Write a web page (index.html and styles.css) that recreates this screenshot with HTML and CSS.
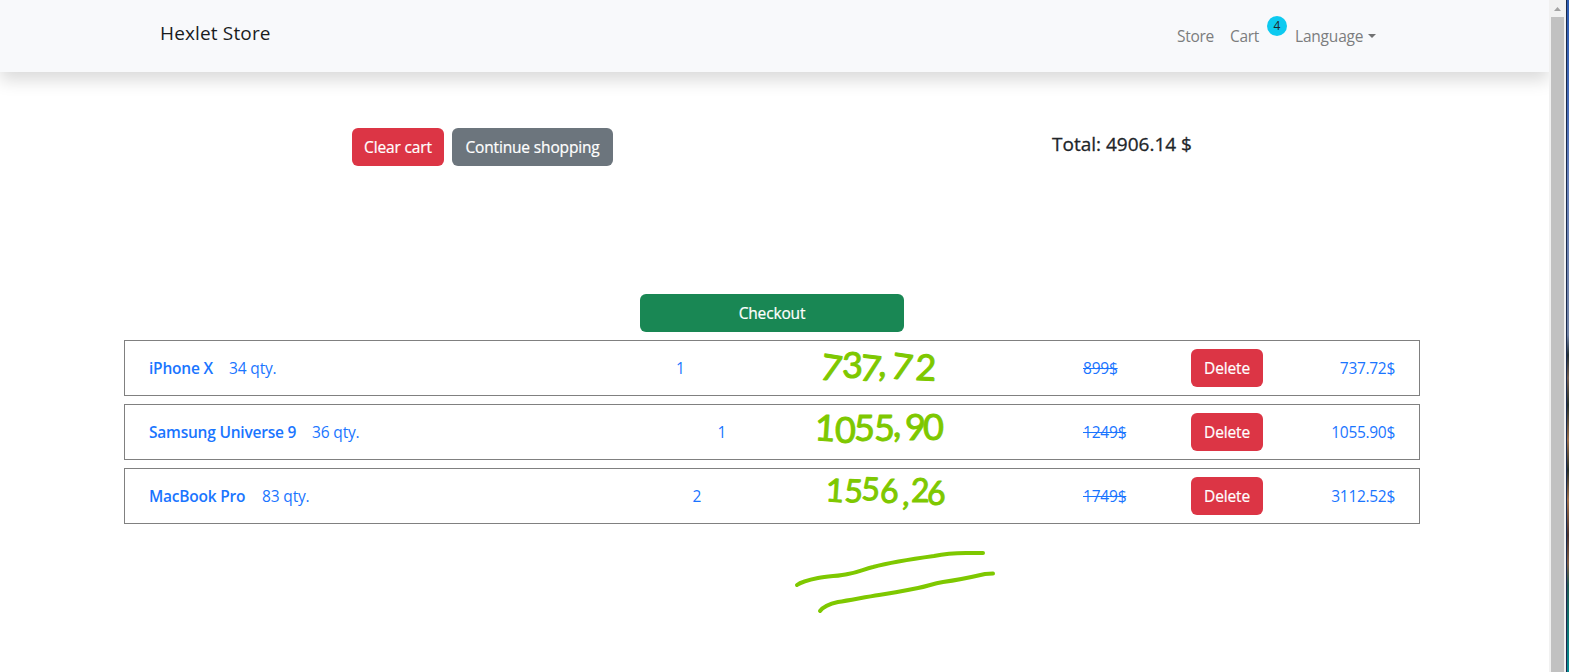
FILE: index.html
```html
<!DOCTYPE html>
<html lang="en">
<head>
<meta charset="utf-8">
<title>Hexlet Store</title>
<link rel="stylesheet" href="styles.css">
</head>
<body>
<div class="window">
  <div class="page">
    <header class="navbar">
      <a class="brand">Hexlet Store</a>
      <nav class="nav">
        <a class="nav-store">Store</a>
        <a class="nav-cart">Cart</a>
        <span class="badge">4</span>
        <a class="nav-lang">Language</a>
        <span class="caret"></span>
      </nav>
    </header>
    <main class="cart">
      <section class="summary">
        <div class="actions">
          <button class="btn danger clear">Clear cart</button>
          <button class="btn secondary">Continue shopping</button>
        </div>
        <h5 class="total">Total: 4906.14 $</h5>
      </section>
      <button class="btn success">Checkout</button>
      <ul class="items">
        <li class="item">
          <div class="product"><b class="n1">iPhone X</b><span class="stock">34 qty.</span></div>
          <span class="count">1</span>
          <div class="pricing"><s>899$</s><button class="btn danger delete">Delete</button><span class="sum">737.72$</span></div>
        </li>
        <li class="item">
          <div class="product"><b class="n2">Samsung Universe 9</b><span class="stock">36 qty.</span></div>
          <span class="count">1</span>
          <div class="pricing"><s>1249$</s><button class="btn danger delete">Delete</button><span class="sum">1055.90$</span></div>
        </li>
        <li class="item">
          <div class="product"><b class="n3">MacBook Pro</b><span class="stock">83 qty.</span></div>
          <span class="count">2</span>
          <div class="pricing"><s>1749$</s><button class="btn danger delete">Delete</button><span class="sum">3112.52$</span></div>
        </li>
      </ul>
    </main>
    <svg class="ink" viewBox="790 340 220 280" width="220" height="280">
      <g class="notes">
        <text x="819 842 859 878 890 915" y="379 378 380 376 378 380" rotate="9 0 6 6 8 2">737,72</text>
        <text x="814 835 854 874 893 905 923" y="440 443 441 441 437 440 440" rotate="4 0 0 0 0 0 0">1055,90</text>
        <text class="small" x="825 844 861 880 902 911 927" y="501 502 500 503 505 502 505" rotate="4 2 2 0 8 0 0">1556,26</text>
      </g>
      <path class="line" d="M797 585C801 582 808 580 818 578C829 576 840 576 848 574C859 572 864 569 873 567C888 563 912 559 934 556C948 553 956 553 966 553L983 553"/>
      <path class="line" d="M820 611C823 607 829 604 838 602C851 600 866 597 879 595C893 593 903 591 918 588C928 586 932 584 943 582C958 580 972 577 985 574L993 573.500"/>
    </svg>
  </div>
  <div class="scrollbar">
    <svg class="arrow" viewBox="0 0 17 17" width="17" height="17"><path d="M5 11L8.500 7L12 11Z"/></svg>
    <div class="thumb"></div>
  </div>
  <div class="desktop"></div>
</div>
</body>
</html>
```

FILE: styles.css
```css
* { box-sizing: border-box; }
body {
  margin: 0;
  font: 400 15.5px/24px "Open Sans", "Noto Sans", sans-serif;
  color: #212529;
  background: #fff;
  overflow: hidden;
}
.window { display: flex; width: 1569px; height: 672px; overflow: hidden; }
.page { position: relative; width: 1549px; overflow: hidden; }
.navbar {
  display: flex;
  align-items: flex-start;
  justify-content: space-between;
  height: 72px;
  padding: 16px 173px 0 160px;
  background: #f8f9fb;
  box-shadow: 0 8px 16px rgba(0, 0, 0, .15);
}
.brand { font-size: 19px; line-height: 34px; letter-spacing: .15px; color: #1a1c1e; }
.nav { display: flex; align-items: flex-start; color: #7c7d7e; line-height: 41px; white-space: nowrap; }
.nav-store { width: 53px; letter-spacing: -.3px; }
.nav-cart { width: 37px; letter-spacing: -.3px; }
.badge {
  width: 20px; height: 20px; margin-right: 8px;
  border-radius: 10px; background: #0dcaf0; color: #212529;
  font-size: 12px; line-height: 20px; text-align: center;
}
.nav-lang { width: 73px; letter-spacing: -.2px; }
.caret {
  width: 8px; margin-top: 18px;
  border: 4px solid transparent; border-top-color: #717273; border-bottom: 0;
}
.cart { display: flex; flex-direction: column; width: 1420px; padding: 56px 0 0 124px; }
.summary { display: flex; height: 166px; }
.actions { display: flex; align-items: flex-start; gap: 8px; width: 928px; padding-left: 228px; }
.total {
  margin: 0; padding-top: 2px; white-space: nowrap;
  font-size: 19px; line-height: 28px; font-weight: 500;
  -webkit-text-stroke: .3px #212529;
}
.btn {
  width: 161px; height: 38px; padding: 0; border: 0; border-radius: 6px;
  font: inherit; letter-spacing: -.15px; color: #fff; white-space: nowrap;
  -webkit-text-stroke: .2px #fff;
}
.clear { width: 92px; }
.danger { background: #dc3545; }
.secondary { background: #6c757d; }
.success { align-self: center; width: 264px; background: #198754; }
.items { display: flex; flex-direction: column; gap: 8px; margin: 8px 0 0; padding: 0; list-style: none; }
.item {
  display: flex; align-items: center; justify-content: space-between;
  height: 56px; padding: 0 24px; border: 1px solid #808080; color: #1a75ff;
}
.product { display: flex; gap: 16px; white-space: nowrap; }
.product b { font-weight: 600; letter-spacing: -.22px; }
.n1 { width: 64px; }
.n2 { width: 147px; }
.n3 { width: 97px; }
.stock { width: 49px; letter-spacing: -.15px; }
.count { width: 9px; }
.pricing { display: flex; align-items: center; width: 312px; }
.pricing s { width: 108px; letter-spacing: -.2px; }
.delete { width: 72px; }
.sum { flex: 1; text-align: right; letter-spacing: -.3px; }
.ink { position: absolute; left: 790px; top: 340px; pointer-events: none; }
.notes { font: 400 36px "Lato", sans-serif; fill: #7ec800; stroke: #7ec800; stroke-width: 1; stroke-linejoin: round; }
.small { font-size: 32px; }
.line { fill: none; stroke: #7ec800; stroke-width: 4; stroke-linecap: round; stroke-linejoin: round; }
.scrollbar { display: flex; flex-direction: column; width: 17px; background: #f1f1f1; }
.arrow { flex: none; fill: #a3a3a3; }
.thumb { flex: 1; width: 13px; margin-left: 2px; background: #c1c1c1; }
.desktop {
  width: 3px; border-left: 1px solid #17284c;
  background: linear-gradient(#2c5bb0 0, #476bb5 110px, #6680b9 180px, #7182a4 335px, #253136 355px, #755f51 378px, #28322d 405px, #9c704c 440px, #293029 470px, #a2724c 500px, #4c3430 535px, #815e45 563px, #235b54 585px, #12736e 620px, #068c93 672px);
}
```
